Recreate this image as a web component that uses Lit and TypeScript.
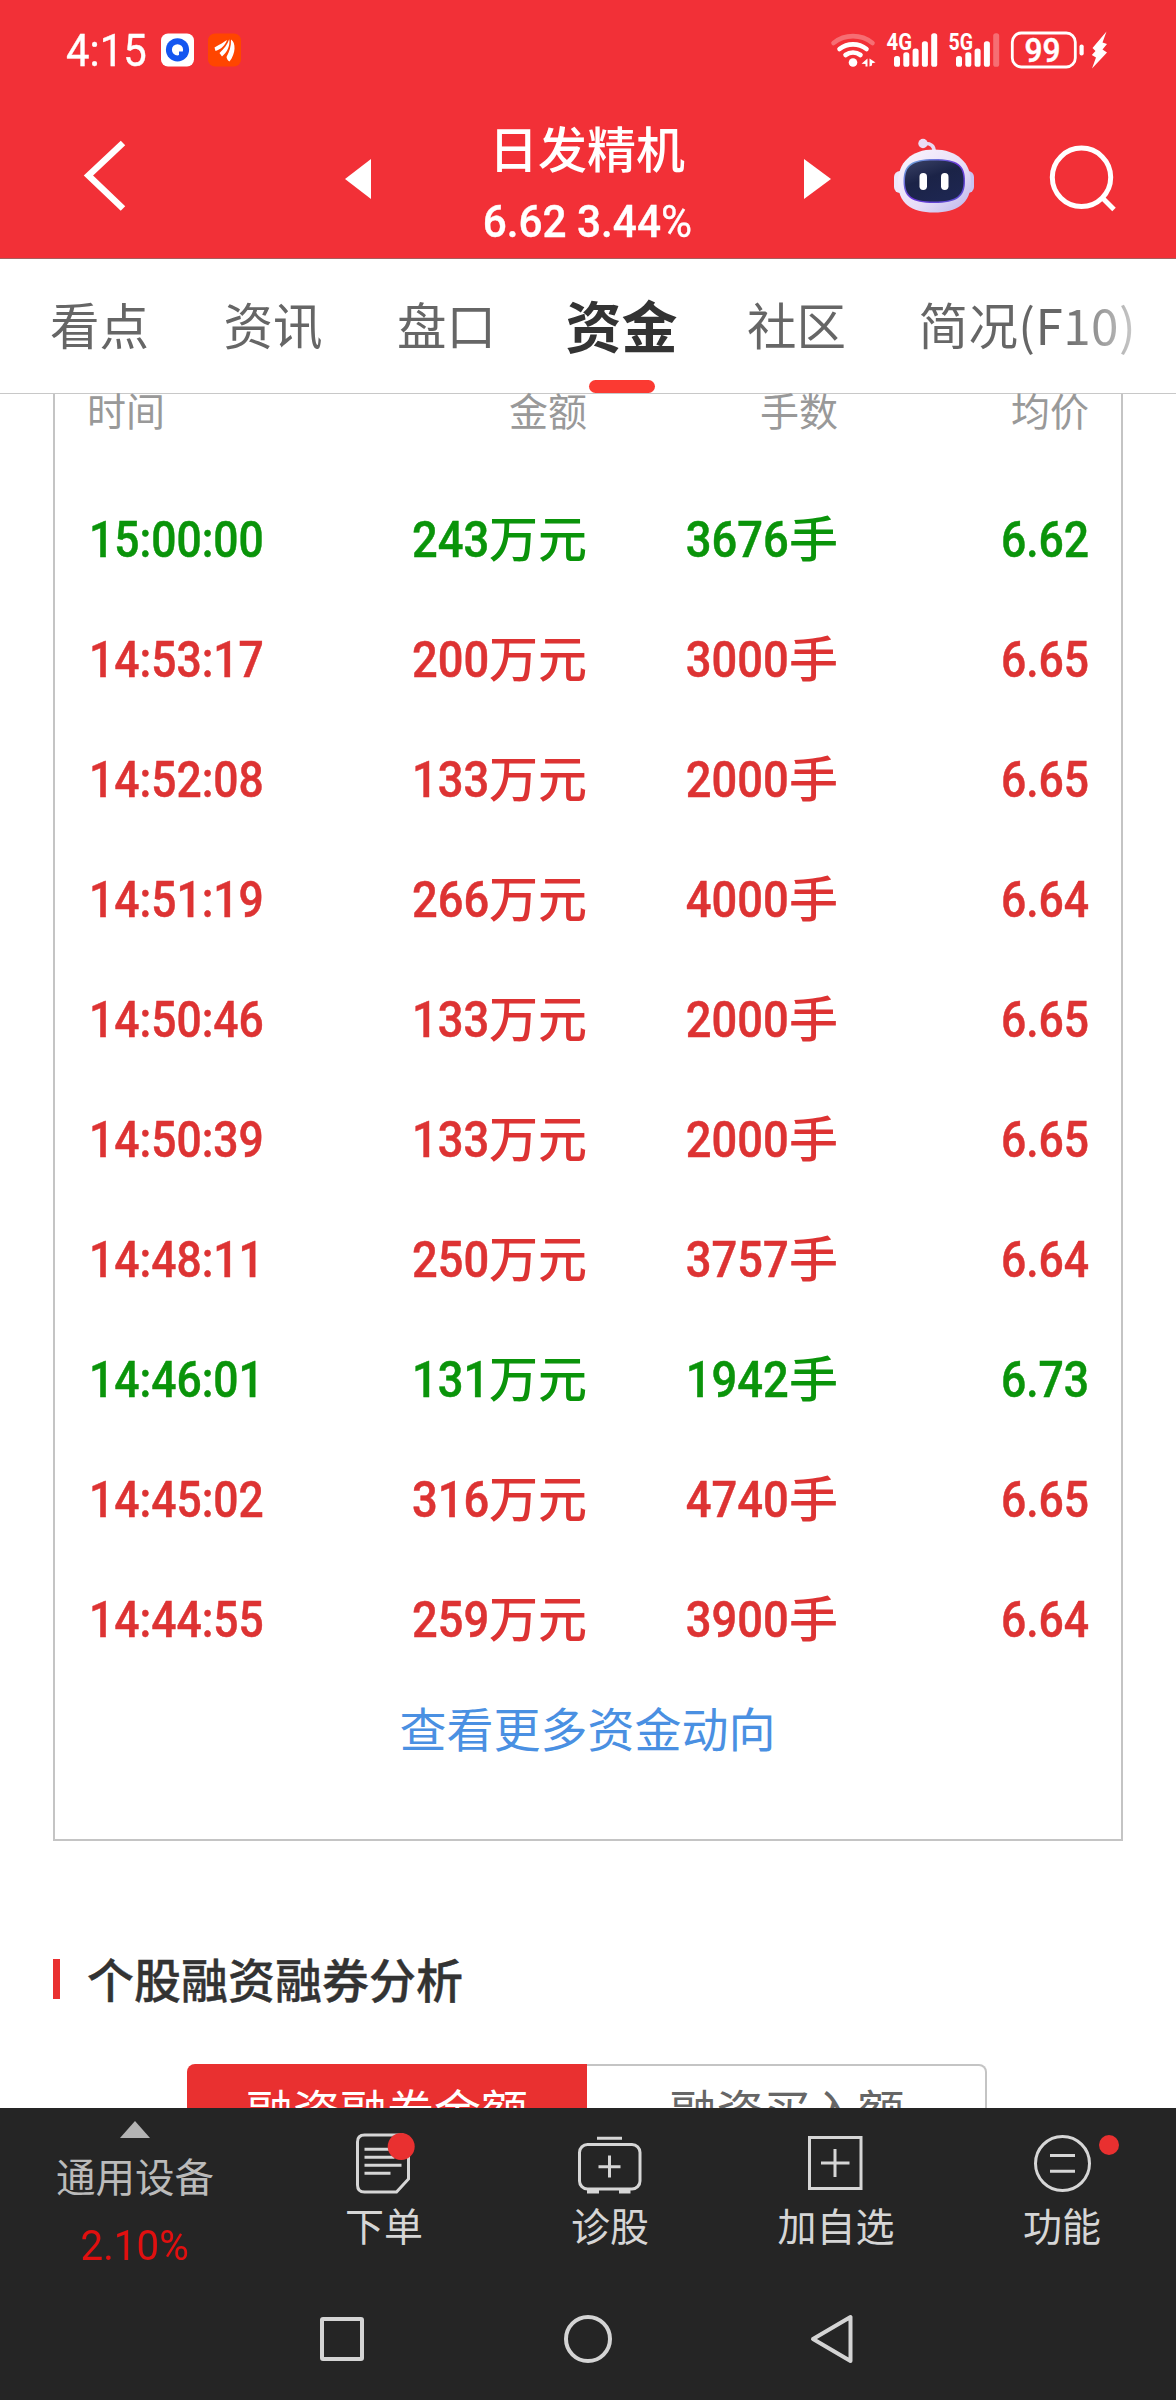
import { LitElement, html, css, svg } from "lit";
import { customElement, property } from "lit/decorators.js";
import { classMap } from "lit/directives/class-map.js";

type Trade = { time: string; amount: string; lots: string; price: string; down?: boolean };

const TRADES: Trade[] = [
  { time: "15:00:00", amount: "243", lots: "3676", price: "6.62", down: true },
  { time: "14:53:17", amount: "200", lots: "3000", price: "6.65" },
  { time: "14:52:08", amount: "133", lots: "2000", price: "6.65" },
  { time: "14:51:19", amount: "266", lots: "4000", price: "6.64" },
  { time: "14:50:46", amount: "133", lots: "2000", price: "6.65" },
  { time: "14:50:39", amount: "133", lots: "2000", price: "6.65" },
  { time: "14:48:11", amount: "250", lots: "3757", price: "6.64" },
  { time: "14:46:01", amount: "131", lots: "1942", price: "6.73", down: true },
  { time: "14:45:02", amount: "316", lots: "4740", price: "6.65" },
  { time: "14:44:55", amount: "259", lots: "3900", price: "6.64" },
];

const TABS = ["看点", "资讯", "盘口", "资金", "社区", "简况(F10)"];

@customElement("status-bar")
class StatusBar extends LitElement {
  static styles = css`
    :host { display: flex; height: 100px; padding: 0 66px 0 66px; align-items: center; justify-content: space-between; color: #fff; }
    .side { display: flex; align-items: center; }
    .clock { font: 400 45px/60px Roboto, sans-serif; width: 95px; padding-top: 1px; white-space: nowrap; }
    .clock span { display: inline-block; transform: scaleX(0.93); transform-origin: left; -webkit-text-stroke: 0.4px #fff; }
    svg { display: block; overflow: visible; }
    .apps { width: 82px; height: 36px; }
    .radio { width: 280px; height: 40px; }
    text { font-family: Roboto, sans-serif; font-weight: 700; fill: #fff; }
    .level { font-weight: 500; }
  `;
  bars(x: number, faintLast = false) {
    const tops = [55.5, 51.7, 48, 40.7, 32.7];
    return tops.map(
      (t, i) => svg`<rect x=${x + i * 9.3} y=${t} width="6" height=${66.3 - t} rx="2.6" fill="#fff" opacity=${faintLast && i === 4 ? 0.3 : 1}></rect>`,
    );
  }
  render() {
    return html`
      <div class="side">
        <div class="clock"><span>4:15</span></div>
        <svg class="apps" viewBox="161 31.5 82 36">
          <rect x="161" y="33" width="33" height="33" rx="7" fill="#fff" />
          <circle cx="177.5" cy="49.3" r="11.6" fill="#1456f0" />
          <path d="M177.5 43.7a5.6 5.6 0 0 1 5.6 5.6l-.3 1.7h-3.8v3.6l-1.5.3a5.6 5.6 0 0 1 0-11.2z" fill="#fff" />
          <rect x="208" y="33" width="33" height="33" rx="7" fill="#ff4500" />
          <path d="M214.5 47C220 44 224 41.5 227 39.5C225.500 44.500 221 49 215.500 50.500Z M219.500 52.500C224 48.500 227.500 44 229.200 38.800C230.500 45 227 52 222 56Z M226.500 56.500C229.500 51 231.200 45.500 231 39C236 42 236 53 229.500 61C227.800 60.500 227 58.500 226.500 56.500Z" fill="#fff" />
        </svg>
      </div>
      <svg class="radio" viewBox="830 29.500 280 40">
        <g fill="none" stroke="#fff" stroke-width="4.600" stroke-linecap="round">
          <path d="M833.500 42.500a31 31 0 0 1 39 0" opacity=".3" />
          <path d="M839.500 48.500a22 22 0 0 1 27 0" />
          <path d="M845.500 54.500a13 13 0 0 1 15 0" />
        </g>
        <circle cx="853" cy="62" r="4.300" fill="#fff" />
        <path d="M867.500 58v8h-2v-2.500l-4-.3zM869.500 66v-8l6 4-3.500.8v2.200z" fill="#fff" />
        <text x="886.500" y="49.800" font-size="23.500" textLength="25.500" lengthAdjust="spacingAndGlyphs">4G</text>
        ${this.bars(894)}
        <text x="948.500" y="49.800" font-size="23.500" textLength="24.500" lengthAdjust="spacingAndGlyphs">5G</text>
        ${this.bars(956, true)}
        <rect x="1012.300" y="32.500" width="63" height="34" rx="9" fill="none" stroke="#fff" stroke-width="2.800" />
        <rect x="1079.500" y="44" width="4.200" height="11" rx="2" fill="#fff" />
        <text class="level" x="1024.500" y="61.300" font-size="33" textLength="36" lengthAdjust="spacingAndGlyphs" stroke="#fff" stroke-width=".5">99</text>
        <path d="M1106.500 31L1092.500 47.500L1095.500 50.500L1091.800 54.500L1096 57L1092 68L1107 52L1102.500 49L1107 43.500L1102.500 42Z" fill="#fff" />
      </svg>
    `;
  }
}

@customElement("stock-header")
class StockHeader extends LitElement {
  static styles = css`
    :host { display: grid; grid-template-columns: 345px 26px 1fr 27px 62px 82px 73px 128px; height: 158px; align-items: start; color: #fff; }
    svg { display: block; }
    .back { width: 46px; height: 76px; margin: 38px 0 0 83px; }
    .arrow { width: 27px; height: 40px; margin-top: 59px; }
    .bot { width: 82px; height: 78px; margin-top: 37px; grid-column: 6; }
    .find { width: 72px; height: 70px; margin-top: 43px; grid-column: 8; }
    .names { display: flex; flex-direction: column; align-items: center; padding-top: 17px; }
    .name { font: 500 49px/60px "Noto Sans CJK SC", sans-serif; margin-right: 1px; }
    .quote { font: 500 45px/56px Roboto, sans-serif; padding-top: 17px; white-space: pre; transform: scaleX(0.94); -webkit-text-stroke: 0.4px #fff; }
    .pct { font-weight: 400; display: inline-block; width: 33px; }
  `;
  render() {
    return html`
      <svg class="back" viewBox="83 138 46 76">
        <path d="M123 143L88.500 175.500L123 208.500" fill="none" stroke="#fff" stroke-width="6.500" />
      </svg>
      <svg class="arrow" viewBox="0 0 27 40"><path d="M0 20L26 0V40Z" fill="#fff" /></svg>
      <div class="names">
        <div class="name">日发精机</div>
        <div class="quote">6.62 3.44<span class="pct">%</span></div>
      </div>
      <svg class="arrow" viewBox="0 0 27 40"><path d="M27 20L0 0V40Z" fill="#fff" /></svg>
      <svg class="bot" viewBox="893 137 82 78">
        <defs>
          <linearGradient id="shell" x1="0" y1="0" x2="1" y2="1">
            <stop offset="0" stop-color="#fbf6fd" /><stop offset=".6" stop-color="#e6dcf7" /><stop offset="1" stop-color="#b9b3ea" />
          </linearGradient>
          <linearGradient id="rim" x1="0" y1="0" x2="1" y2="1">
            <stop offset="0" stop-color="#6fb9dc" /><stop offset=".5" stop-color="#6a35d8" /><stop offset="1" stop-color="#5750ce" />
          </linearGradient>
          <linearGradient id="visor" x1="0" y1="0" x2=".5" y2="1">
            <stop offset="0" stop-color="#3b4266" /><stop offset=".5" stop-color="#1b2347" /><stop offset="1" stop-color="#1d2650" />
          </linearGradient>
        </defs>
        <path d="M924 143.500C931 143 934.500 146 934 152" fill="none" stroke="#e8d9f2" stroke-width="3.600" />
        <circle cx="923" cy="143.500" r="4.700" fill="#eadcf5" />
        <rect x="894" y="171" width="14" height="22" rx="6" fill="#eee7fa" />
        <rect x="960" y="171" width="14" height="22" rx="6" fill="#c9c3f3" />
        <path d="M934 149.500C957 149.500 971 163 971 182C971 203 957 212.500 934 212.500C911 212.500 898 203 898 182C898 163 911 149.500 934 149.500Z" fill="url(#shell)" />
        <path d="M934 159C958 159 965 165 965 181C965 197 957 203 934 203C911 203 903.500 197 903.500 181C903.500 165 911 159 934 159Z" fill="url(#rim)" />
        <path d="M934 160.500C957 160.500 963.500 166 963.500 181C963.500 196 956 201.500 934 201.500C912 201.500 905 196 905 181C905 166 912 160.500 934 160.500Z" fill="url(#visor)" />
        <rect x="919.500" y="173" width="7.500" height="17" rx="3.700" fill="#fff" />
        <rect x="941" y="173" width="7.500" height="17" rx="3.700" fill="#fff" />
      </svg>
      <svg class="find" viewBox="1048 143 72 70">
        <g fill="none" stroke="#fff" stroke-width="5">
          <circle cx="1081.500" cy="177.300" r="29.200" /><path d="M1102 197.500L1114 209.500" />
        </g>
      </svg>
    `;
  }
}

@customElement("tab-strip")
class TabStrip extends LitElement {
  @property() active = "资金";
  static styles = css`
    :host { display: flex; box-sizing: border-box; height: 136px; border-top: 1px solid #a5605f; border-bottom: 1px solid #c8c8c8; background: #fff; padding-left: 50px; gap: 74.500px; }
    .tab { position: relative; display: flex; box-sizing: border-box; align-items: center; height: 134px; padding-bottom: 4px; font: 400 49.500px/60px "Noto Sans CJK SC", sans-serif; color: #666; white-space: nowrap; }
    .on { font-size: 56px; font-weight: 700; color: #333; margin: 0 -5px; }
    .on::after { content: ""; position: absolute; left: 50%; bottom: 0; width: 66px; height: 13px; margin-left: -33px; border-radius: 7px; background: #fb3a32; }
    .fade { margin-left: -2px; letter-spacing: 0.400px; background: linear-gradient(90deg, #666 66%, #ccc 100%); background-clip: text; -webkit-background-clip: text; color: transparent; }
  `;
  render() {
    return TABS.map(
      (t, i) => html`<div class="tab ${classMap({ on: t === this.active, fade: i === TABS.length - 1 })}">${t}</div>`,
    );
  }
}

@customElement("trade-table")
class TradeTable extends LitElement {
  static styles = css`
    :host { display: block; box-sizing: border-box; width: 1070px; height: 1447px; margin-left: 53px; border: 2px solid #c4c4c4; border-top: 0; padding: 0 32px; }
    .head, .row { display: grid; grid-template-columns: 240px 260px 251px 1fr; text-align: right; }
    .head { height: 86px; font: 400 39px/31px "Noto Sans CJK SC", sans-serif; color: #999; }
    .head > :first-child, .row > :first-child { text-align: left; }
    .row { height: 120px; color: #dd3333; align-items: baseline; font: 500 50px/120px Roboto, sans-serif; white-space: nowrap; }
    .down { color: #0a940a; }
    .num { display: inline-block; line-height: 60px; transform: scaleX(0.905); transform-origin: right; -webkit-text-stroke: 0.500px currentColor; }
    .time { transform: scaleX(0.888); transform-origin: left; margin-left: 2px; }
    .price { transform: scaleX(0.89); }
    .unit { font: 500 49px/58px "Noto Sans CJK SC", sans-serif; }
    .more { font: 400 47px/60px "Noto Sans CJK SC", sans-serif; color: #4a90e2; text-align: center; padding-top: 17px; margin-right: 1px; }
  `;
  render() {
    return html`
      <div class="head"><span>时间</span><span>金额</span><span>手数</span><span>均价</span></div>
      ${TRADES.map(
        (t) => html`<div class="row ${classMap({ down: !!t.down })}">
          <span><span class="num time">${t.time}</span></span>
          <span><span class="num">${t.amount}</span><span class="unit">万元</span></span>
          <span><span class="num">${t.lots}</span><span class="unit">手</span></span>
          <span><span class="num price">${t.price}</span></span>
        </div>`,
      )}
      <div class="more">查看更多资金动向</div>
    `;
  }
}

@customElement("margin-section")
class MarginSection extends LitElement {
  static styles = css`
    :host { display: block; height: 267px; overflow: hidden; }
    .title { display: flex; align-items: center; margin: 108px 0 0 53px; height: 60px; gap: 27px; font: 500 47px/58px "Noto Sans CJK SC", sans-serif; color: #333; -webkit-text-stroke: 0.4px #333; }
    .name { padding-bottom: 3px; }
    .mark { width: 7px; height: 40px; background: #e93030; }
    .seg { display: grid; grid-template-columns: 400px 400px; width: 800px; margin: 55px 0 0 187px; height: 90px; font: 400 47px/85px "Noto Sans CJK SC", sans-serif; text-align: center; }
    .seg > * { box-sizing: border-box; }
    .sel { background: #e93030; color: #fff; border-radius: 8px 0 0 0; padding-top: 2px; }
    .opt { border: 2px solid #c4c4c4; border-left: 0; border-radius: 0 8px 0 0; color: #666; padding-left: 2px; }
  `;
  render() {
    return html`
      <div class="title"><span class="mark"></span><span class="name">个股融资融券分析</span></div>
      <div class="seg"><div class="sel">融资融券金额</div><div class="opt">融资买入额</div></div>
    `;
  }
}

@customElement("bottom-bar")
class BottomBar extends LitElement {
  static styles = css`
    :host { display: grid; grid-template-columns: 271px repeat(4, 226px); grid-template-rows: 172px 120px; height: 292px; background: #252525; overflow: hidden; }
    svg { display: block; }
    .cell { display: flex; flex-direction: column; align-items: center; font: 400 39px/50px "Noto Sans CJK SC", sans-serif; color: #d6d6d6; }
    .quote { padding-right: 1px; }
    .icon { width: 180px; height: 64px; margin: 24px 0 3px; }
    .tip { width: 30px; height: 17px; margin: 13px 0 7px; }
    .index { color: #bbb; padding-top: 5px; font-size: 39.500px; }
    .rate { font: 400 43px/50px Roboto, sans-serif; color: #e01010; padding-top: 20px; transform: scaleX(0.94); }
    .keys { grid-column: 1 / 6; display: flex; gap: 198px; padding: 33px 0 0 318px; height: 52px; }
    .key { width: 48px; height: 52px; }
    .ln { fill: none; stroke: #d6d6d6; stroke-width: 3; }
    .kn { fill: none; stroke: #d4d4d4; stroke-width: 4; stroke-linejoin: round; }
    .dot { fill: #e93030; }
  `;
  render() {
    return html`
      <div class="cell quote">
        <svg class="tip" viewBox="0 0 30 17"><path d="M15 0L30 17H0Z" fill="#b4b4b4" /></svg>
        <div class="index">通用设备</div>
        <div class="rate">2.10%</div>
      </div>
      <div class="cell">
        <svg class="icon" viewBox="294.500 2132 180 64">
          <path class="ln" d="M404 2135H365Q358 2135 358 2142V2185Q358 2192 365 2192H397L409 2179V2140" />
          <path class="ln" d="M365 2149.300H392M365 2157.300H395M365 2165.300H402M365 2173.300H391" />
          <circle class="dot" cx="401.700" cy="2146.500" r="13.500" />
        </svg>
        <div>下单</div>
      </div>
      <div class="cell">
        <svg class="icon" viewBox="520 2132 180 64">
          <rect class="ln" x="579.500" y="2144.500" width="60.500" height="44.500" rx="8" />
          <path class="ln" d="M597 2138.300H622M598.500 2166.700H620.500M609.500 2155.500V2177.500" />
          <path d="M587 2189H599V2193.500H587ZM619 2189H630.500V2193.500H619Z" fill="#d6d6d6" />
        </svg>
        <div>诊股</div>
      </div>
      <div class="cell">
        <svg class="icon" viewBox="746 2132 180 64">
          <rect class="ln" x="809.500" y="2137.500" width="51.500" height="51" />
          <path class="ln" d="M821 2163H849.500M835 2149V2177" />
        </svg>
        <div>加自选</div>
      </div>
      <div class="cell">
        <svg class="icon" viewBox="972 2132 180 64">
          <circle class="ln" cx="1062.500" cy="2163.500" r="27" />
          <path class="ln" d="M1050 2155.500H1075M1050 2171.300H1075" />
          <circle class="dot" cx="1109" cy="2145" r="10" />
        </svg>
        <div>功能</div>
      </div>
      <div class="keys">
        <svg class="key" viewBox="318 2313 48 52"><rect class="kn" x="322" y="2319" width="40" height="40" rx="1" /></svg>
        <svg class="key" viewBox="564 2313 48 52"><circle class="kn" cx="588" cy="2339" r="22" /></svg>
        <svg class="key" viewBox="810 2313 48 52"><path class="kn" d="M813 2339L850.500 2317V2361Z" /></svg>
      </div>
    `;
  }
}

@customElement("app-root")
class AppRoot extends LitElement {
  static styles = css`
    :host { display: block; width: 1176px; height: 2400px; overflow: hidden; background: #fff; }
    .top { background: #f23037; }
  `;
  render() {
    return html`
      <div class="top"><status-bar></status-bar><stock-header></stock-header></div>
      <tab-strip></tab-strip>
      <trade-table></trade-table>
      <margin-section></margin-section>
      <bottom-bar></bottom-bar>
    `;
  }
}
